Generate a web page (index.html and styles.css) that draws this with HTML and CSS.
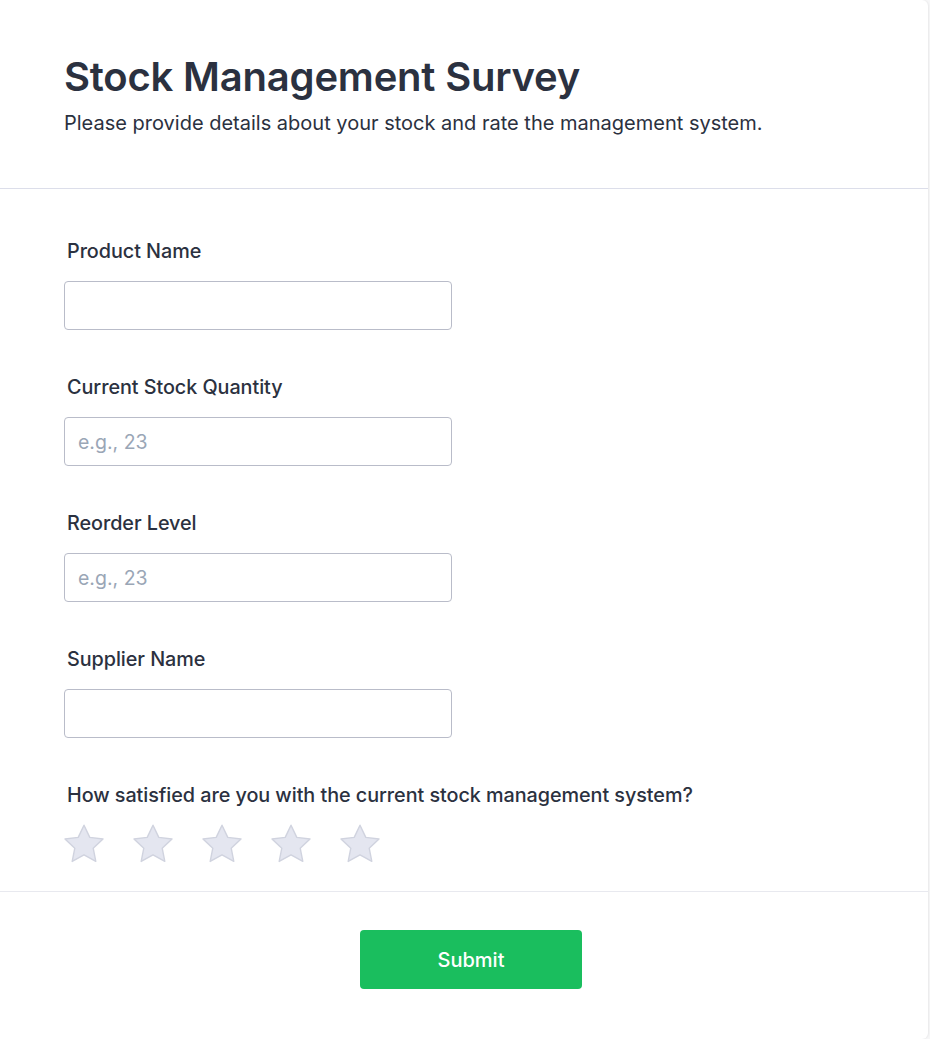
FILE: index.html
```html
<!DOCTYPE html>
<html lang="en">
<head>
<meta charset="utf-8">
<title>Stock Management Survey</title>
<link rel="stylesheet" href="styles.css">
</head>
<body>
<div class="card">
  <header class="header">
    <h1 class="title">Stock Management Survey</h1>
    <p class="subtitle">Please provide details about your stock and rate the management system.</p>
  </header>
  <form class="form">
    <div class="field">
      <label class="label">Product Name</label>
      <input class="input" type="text">
    </div>
    <div class="field">
      <label class="label">Current Stock Quantity</label>
      <input class="input" type="text" placeholder="e.g., 23">
    </div>
    <div class="field">
      <label class="label">Reorder Level</label>
      <input class="input" type="text" placeholder="e.g., 23">
    </div>
    <div class="field">
      <label class="label">Supplier Name</label>
      <input class="input" type="text">
    </div>
    <div class="rating">
      <label class="label">How satisfied are you with the current stock management system?</label>
      <div class="stars">
        <svg class="star" viewBox="2 2 20 20"><path d="M12 2.6l2.9 6.1 6.6.8-4.9 4.6 1.3 6.6L12 17.4l-5.9 3.3 1.3-6.6L2.5 9.5l6.6-.8z"/></svg>
        <svg class="star" viewBox="2 2 20 20"><path d="M12 2.6l2.9 6.1 6.6.8-4.9 4.6 1.3 6.6L12 17.4l-5.9 3.3 1.3-6.6L2.5 9.5l6.6-.8z"/></svg>
        <svg class="star" viewBox="2 2 20 20"><path d="M12 2.6l2.9 6.1 6.6.8-4.9 4.6 1.3 6.6L12 17.4l-5.9 3.3 1.3-6.6L2.5 9.5l6.6-.8z"/></svg>
        <svg class="star" viewBox="2 2 20 20"><path d="M12 2.6l2.9 6.1 6.6.8-4.9 4.6 1.3 6.6L12 17.4l-5.9 3.3 1.3-6.6L2.5 9.5l6.6-.8z"/></svg>
        <svg class="star" viewBox="2 2 20 20"><path d="M12 2.6l2.9 6.1 6.6.8-4.9 4.6 1.3 6.6L12 17.4l-5.9 3.3 1.3-6.6L2.5 9.5l6.6-.8z"/></svg>
      </div>
    </div>
  </form>
  <footer class="footer">
    <button class="submit" type="button">Submit</button>
  </footer>
</div>
</body>
</html>
```
FILE: styles.css
```css
* { box-sizing: border-box; }
html, body { margin: 0; padding: 0; }
body {
  background: #f7f7f8;
  font-family: Inter, "Noto Sans", "Liberation Sans", sans-serif;
  color: #2b3140;
}
.card {
  width: 928px;
  min-height: 1039px;
  background: #ffffff;
  border-radius: 0 6px 6px 0;
  box-shadow: 1px 0 2px rgba(0,0,0,0.06);
}
.header {
  padding: 52px 64px 0;
  height: 189px;
  border-bottom: 1px solid #dcdeea;
}
.title {
  margin: 0;
  font-size: 40px;
  font-weight: 600;
  line-height: 50px;
  color: #2b3140;
  letter-spacing: -0.2px;
}
.subtitle {
  margin: 8px 0 0;
  font-size: 20px;
  font-weight: 400;
  line-height: 26px;
  color: #2b3140;
}
.form {
  padding: 48px 64px 0;
  height: 703px;
  border-bottom: 1px solid #e8e9ef;
}
.field {
  display: flex;
  flex-direction: column;
  margin-bottom: 43px;
}
.label {
  display: block;
  padding-left: 3px;
  font-size: 19.8px;
  font-weight: 500;
  line-height: 28px;
  letter-spacing: -0.05px;
  color: #2b3140;
}
.input {
  margin-top: 16px;
  width: 388px;
  height: 49px;
  border: 1px solid #b9bcc9;
  border-radius: 4px;
  padding: 0 13px;
  font-family: inherit;
  font-size: 19.5px;
  font-weight: 400;
  color: #2b3140;
  background: #fff;
}
.input::placeholder { color: #9aa6b6; }
.rating { margin-top: 1px; }
.stars {
  display: flex;
  gap: 29px;
  margin-top: 15px;
}
.star {
  width: 40px;
  height: 40px;
  fill: #e4e6f0;
  stroke: #d0d3df;
  stroke-width: 0.7;
  stroke-linejoin: round;
}
.footer {
  display: flex;
  justify-content: center;
  padding: 38px 0 0 14px;
}
.submit {
  width: 222px;
  height: 59px;
  border: none;
  border-radius: 4px;
  background: #1abe5e;
  color: #fff;
  font-family: inherit;
  font-size: 20px;
  font-weight: 500;
  cursor: pointer;
}
```
